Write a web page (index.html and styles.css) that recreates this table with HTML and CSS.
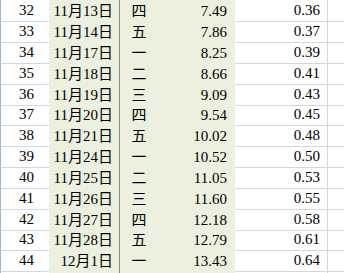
FILE: index.html
```html
<!DOCTYPE html>
<html lang="zh">
<head>
<meta charset="utf-8">
<link rel="stylesheet" href="styles.css">
</head>
<body>
<div class="sheet">
  <div class="row first"><div class="c a">32</div><div class="c b">11月13日</div><div class="c w">四</div><div class="c d">7.49</div><div class="c e">0.36</div><div class="c f"></div></div>
  <div class="row"><div class="c a">33</div><div class="c b">11月14日</div><div class="c w">五</div><div class="c d">7.86</div><div class="c e">0.37</div><div class="c f"></div></div>
  <div class="row"><div class="c a">34</div><div class="c b">11月17日</div><div class="c w">一</div><div class="c d">8.25</div><div class="c e">0.39</div><div class="c f"></div></div>
  <div class="row"><div class="c a">35</div><div class="c b">11月18日</div><div class="c w">二</div><div class="c d">8.66</div><div class="c e">0.41</div><div class="c f"></div></div>
  <div class="row short"><div class="c a">36</div><div class="c b">11月19日</div><div class="c w">三</div><div class="c d">9.09</div><div class="c e">0.43</div><div class="c f"></div></div>
  <div class="row"><div class="c a">37</div><div class="c b">11月20日</div><div class="c w">四</div><div class="c d">9.54</div><div class="c e">0.45</div><div class="c f"></div></div>
  <div class="row"><div class="c a">38</div><div class="c b">11月21日</div><div class="c w">五</div><div class="c d">10.02</div><div class="c e">0.48</div><div class="c f"></div></div>
  <div class="row"><div class="c a">39</div><div class="c b">11月24日</div><div class="c w">一</div><div class="c d">10.52</div><div class="c e">0.50</div><div class="c f"></div></div>
  <div class="row"><div class="c a">40</div><div class="c b">11月25日</div><div class="c w">二</div><div class="c d">11.05</div><div class="c e">0.53</div><div class="c f"></div></div>
  <div class="row"><div class="c a">41</div><div class="c b">11月26日</div><div class="c w">三</div><div class="c d">11.60</div><div class="c e">0.55</div><div class="c f"></div></div>
  <div class="row short"><div class="c a">42</div><div class="c b">11月27日</div><div class="c w">四</div><div class="c d">12.18</div><div class="c e">0.58</div><div class="c f"></div></div>
  <div class="row"><div class="c a">43</div><div class="c b">11月28日</div><div class="c w">五</div><div class="c d">12.79</div><div class="c e">0.61</div><div class="c f"></div></div>
  <div class="row"><div class="c a">44</div><div class="c b">12月1日</div><div class="c w">一</div><div class="c d">13.43</div><div class="c e">0.64</div><div class="c f"></div></div>
  <div class="row tail"><div class="c a"></div><div class="c b"></div><div class="c w"></div><div class="c d"></div><div class="c e"></div><div class="c f"></div></div>
</div>
</body>
</html>
```

FILE: styles.css
```css
html, body {
  margin: 0;
  padding: 0;
  background: #ffffff;
}
body {
  width: 344px;
  height: 273px;
  overflow: hidden;
  font-family: "Liberation Serif", "Noto Sans CJK SC", serif;
  font-size: 15px;
  color: #000000;
}
.sheet {
  display: flex;
  flex-direction: column;
  height: 273px;
  overflow: hidden;
}
.row {
  display: grid;
  grid-template-columns: 49px 71px 38px 77px 93px 1fr;
  height: 21px;
  flex: none;
}
.row.first {
  height: 22px;
}
.row.short {
  height: 20px;
}
.row.tail {
  height: 1px;
  overflow: hidden;
}
.c {
  box-sizing: border-box;
  line-height: 18px;
  white-space: nowrap;
  display: flex;
  align-items: flex-end;
  padding-bottom: 2px;
}
.tail .c {
  border-bottom: 0;
  padding: 0;
}
.a {
  border-left: 1px solid #9eb6ce;
  border-bottom: 1px solid #d0d7e5;
  justify-content: flex-end;
  padding-right: 15px;
}
.b {
  background: #ebf1de;
  border-right: 1px solid #8c8c8c;
  justify-content: flex-end;
  padding-right: 6px;
}
.w {
  background: #ebf1de;
  justify-content: center;
}
.d {
  background: #ebf1de;
  justify-content: flex-end;
  padding-right: 8px;
}
.e {
  border-bottom: 1px solid #d0d7e5;
  border-right: 1px solid #d0d7e5;
  justify-content: flex-end;
  padding-right: 7px;
}
.f {
  border-bottom: 1px solid #d0d7e5;
}
```
